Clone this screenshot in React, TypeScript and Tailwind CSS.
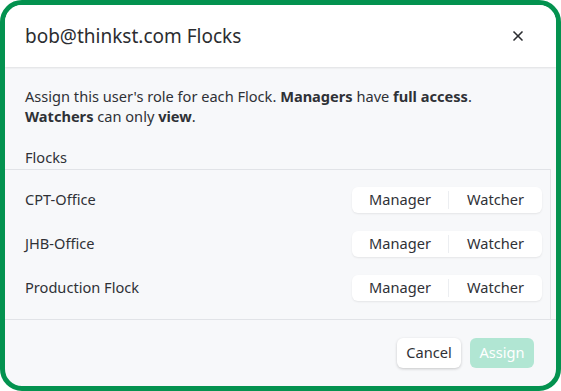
import { X } from 'lucide-react';

const flocks = ['CPT-Office', 'JHB-Office', 'Production Flock'];

function RoleToggle() {
    return (
        <div className="flex h-[26px] rounded-md bg-white shadow-[0_1px_2px_rgba(0,0,0,0.08)] text-[14.6px] text-[#2f3136]">
            <button className="w-[96px] flex items-center justify-center">Manager</button>
            <div className="w-px my-1 bg-[#eceef1]" />
            <button className="w-[93px] flex items-center justify-center">Watcher</button>
        </div>
    );
}

export default function App() {
    return (
        <div className="w-[561px] h-[391px] bg-white" style={{ fontFamily: '"Noto Sans", Lato, sans-serif' }}>
            <div className="h-full flex flex-col overflow-hidden rounded-[22px] border-[5px] border-[#03924f] bg-[#f7f8fa]">
                <div className="h-[62px] shrink-0 flex items-center justify-between pl-5 pr-[30px] bg-white shadow-[0_1px_2px_rgba(0,0,0,0.1)] z-10">
                    <h2 className="text-[19px] text-[#2b2d31]">bob@thinkst.com Flocks</h2>
                    <X className="w-4 h-4 text-[#2b2d31]" strokeWidth={2.5} />
                </div>

                <div className="flex-1 flex flex-col">
                    <p className="px-5 pt-[19px] text-[14.6px] leading-5 text-[#2f3136]">
                        Assign this user's role for each Flock. <b className="font-bold">Managers</b> have <b className="font-bold">full access</b>.
                        <br />
                        <b className="font-bold">Watchers</b> can only <b className="font-bold">view</b>.
                    </p>
                    <div className="px-5 mt-[21px] pb-[2px] text-[14.6px] leading-5 text-[#2f3136]">Flocks</div>
                    <div className="flex-1 mr-[5px] pt-[8px] border-t border-r border-[#e1e3e7]">
                        {flocks.map((name) => (
                            <div key={name} className="h-11 flex items-center justify-between pl-5 pr-2 text-[14.6px] text-[#2f3136]">
                                <span>{name}</span>
                                <RoleToggle />
                            </div>
                        ))}
                    </div>
                </div>

                <div className="h-[67px] shrink-0 flex items-center justify-end gap-[9px] pr-[22px] border-t border-[#e1e3e7]">
                    <button className="w-[64px] h-[30px] rounded-md bg-white shadow-[0_1px_3px_rgba(0,0,0,0.2)] text-[14.6px] text-[#2f3136]">Cancel</button>
                    <button className="w-[64px] h-[30px] rounded-md bg-[#b1e6d3] text-[14.6px] text-white">Assign</button>
                </div>
            </div>
        </div>
    );
}
